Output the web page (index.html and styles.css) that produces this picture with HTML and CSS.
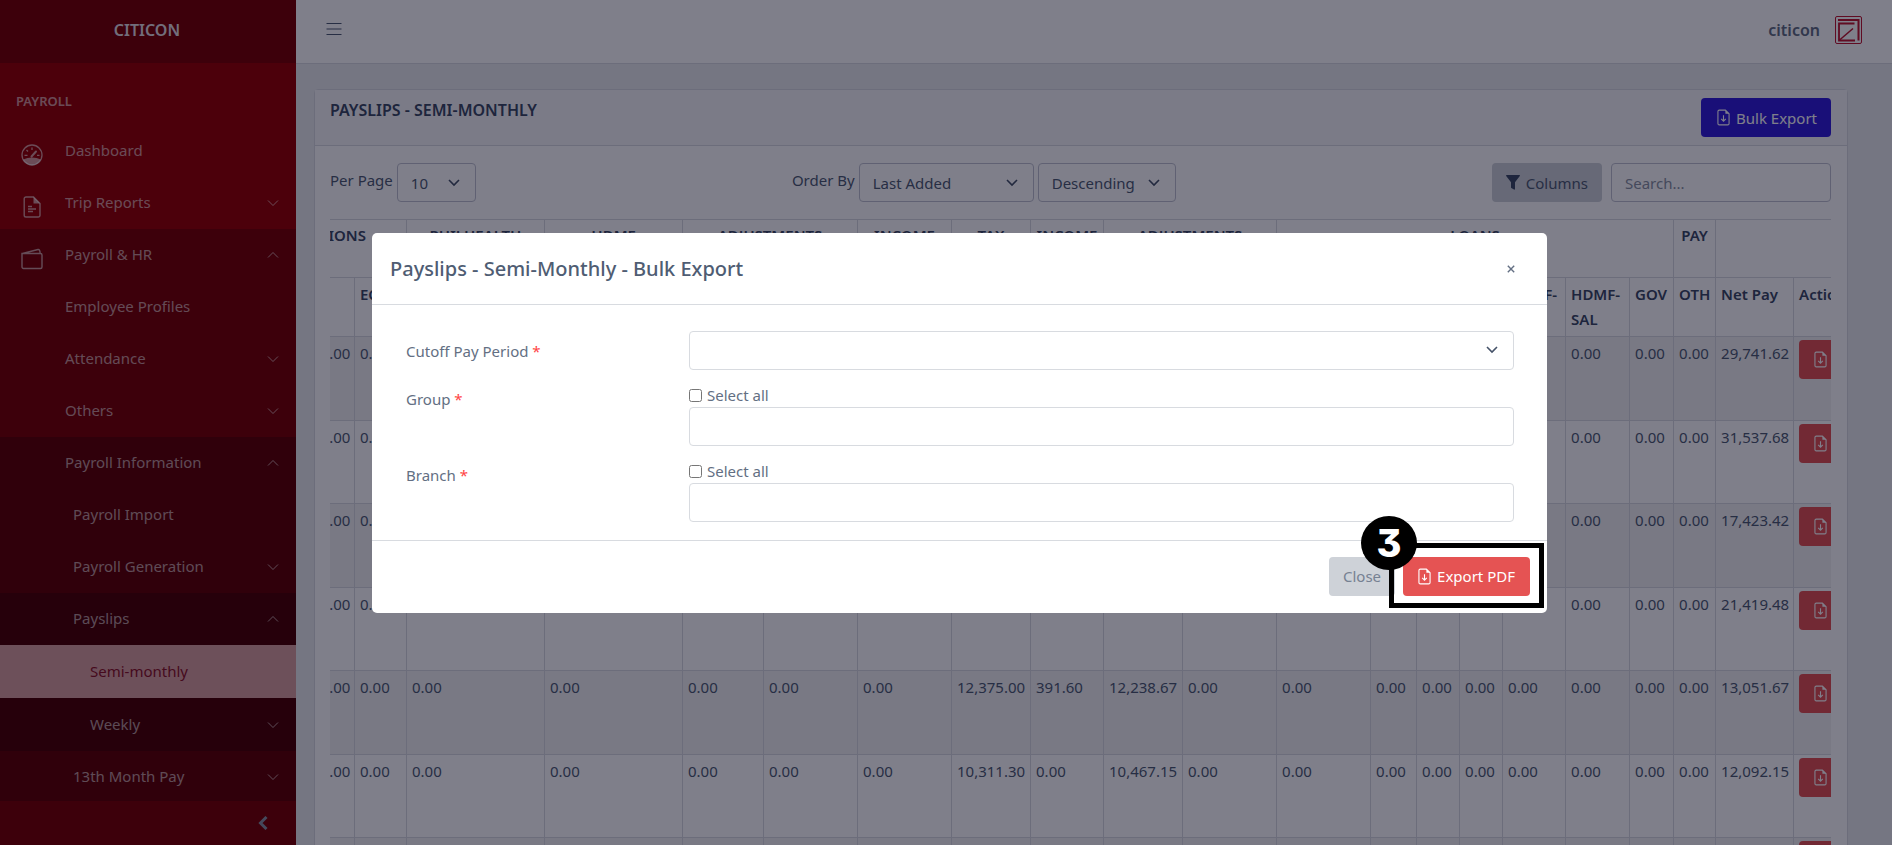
FILE: index.html
```html
<!DOCTYPE html>
<html lang="en">
<head>
<meta charset="utf-8">
<title>CITICON - Payslips</title>
<link rel="stylesheet" href="styles.css">
</head>
<body>
<svg class="sprite" aria-hidden="true">
  <symbol id="down" viewBox="0 0 12 12"><path d="M1 3.5l5 5 5-5" fill="none" stroke="currentColor"/></symbol>
  <symbol id="up" viewBox="0 0 12 12"><path d="M1 8.5l5-5 5 5" fill="none" stroke="currentColor"/></symbol>
  <symbol id="file-down" viewBox="0 0 14 18"><path d="M9 1H2.5A1.5 1.5 0 0 0 1 2.500V15.500A1.500 1.500 0 0 0 2.500 17h9a1.500 1.500 0 0 0 1.500-1.500V5z" fill="none" stroke="currentColor" stroke-width="1.200"/><path d="M9 1v4h4z" fill="currentColor"/><path d="M7 6.500v6.500M4.500 10.500L7 13l2.500-2.500" fill="none" stroke="currentColor" stroke-width="1.200"/></symbol>
</svg>
<div class="app">
  <aside class="sidebar">
    <div class="brand">CITICON</div>
    <nav class="nav">
      <div class="nav-title">PAYROLL</div>
      <a class="item" href="#">
        <svg class="nav-icon" viewBox="0 0 22 22"><circle cx="11" cy="11" r="10" fill="none" stroke="currentColor" stroke-width="1.300"/><path d="M2 15.500Q11 11.500 20 15.500A10 10 0 0 1 2 15.500z" fill="currentColor"/><path d="M10.500 12.500L15 7.500" stroke="currentColor" stroke-width="2" stroke-linecap="round"/><path d="M11 3.500v2.500M5.500 6l1.500 1.500M3.500 11.300h3M16 11.300h2.500" stroke="currentColor" stroke-width="1.300"/></svg>
        <span>Dashboard</span></a>
      <a class="item" href="#">
        <svg class="nav-icon" viewBox="0 0 22 22"><path d="M12.500 1H5A1.800 1.800 0 0 0 3.200 2.800v16.400A1.800 1.800 0 0 0 5 21h12.200a1.800 1.800 0 0 0 1.800-1.800V7.500z" fill="none" stroke="currentColor" stroke-width="1.400"/><path d="M12.500 1v6.500H19z" fill="currentColor"/><path d="M7 10.500h4M7 13h8M7 15.500h5" stroke="currentColor" stroke-width="1.300"/></svg>
        <span>Trip Reports</span><svg class="chev"><use href="#down"/></svg></a>
      <div class="group">
        <a class="item" href="#">
          <svg class="nav-icon" viewBox="0 0 22 22"><path d="M1 5.500h18.500A1.500 1.500 0 0 1 21 7v12a1.500 1.500 0 0 1-1.500 1.500h-17A1.500 1.500 0 0 1 1 19zM1.500 5.500L17 1.500q2-.4 2.200 4" fill="none" stroke="currentColor" stroke-width="1.400"/></svg>
          <span>Payroll &amp; HR</span><svg class="chev"><use href="#up"/></svg></a>
        <a class="item sub" href="#"><span>Employee Profiles</span></a>
        <a class="item sub" href="#"><span>Attendance</span><svg class="chev"><use href="#down"/></svg></a>
        <a class="item sub" href="#"><span>Others</span><svg class="chev"><use href="#down"/></svg></a>
        <div class="group">
          <a class="item sub" href="#"><span>Payroll Information</span><svg class="chev"><use href="#up"/></svg></a>
          <a class="item sub3" href="#"><span>Payroll Import</span></a>
          <a class="item sub3" href="#"><span>Payroll Generation</span><svg class="chev"><use href="#down"/></svg></a>
          <div class="group">
            <a class="item sub3" href="#"><span>Payslips</span><svg class="chev"><use href="#up"/></svg></a>
            <a class="item sub4 active" href="#"><span>Semi-monthly</span></a>
            <a class="item sub4" href="#"><span>Weekly</span><svg class="chev"><use href="#down"/></svg></a>
          </div>
          <a class="item sub3" href="#"><span>13th Month Pay</span><svg class="chev"><use href="#down"/></svg></a>
        </div>
      </div>
    </nav>
    <button class="minimize" type="button" aria-label="Collapse sidebar"><svg viewBox="0 0 10 14"><path d="M8.500 1L2.500 7l6 6" fill="none" stroke="currentColor" stroke-width="3"/></svg></button>
  </aside>

  <div class="main">
    <header class="topbar">
      <button class="burger" type="button" aria-label="Toggle menu"><svg viewBox="0 0 16 14"><path d="M.5 1.500h15M.5 7h15M.5 12.500h15" stroke="currentColor" stroke-width="1.200"/></svg></button>
      <a class="user" href="#">citicon
        <svg class="avatar" viewBox="0 0 27 28"><g fill="none" stroke="#c01830"><rect x=".5" y=".5" width="26" height="27" rx="1.500"/><path d="M3 4h20.500v20.500" stroke-width="2"/><path d="M19.500 7.500H4V24.500h16" stroke-width="1.800"/><path d="M4 24.500L18 12.500" stroke-width="1.600"/></g></svg></a>
    </header>
    <main class="content">
      <section class="card">
        <div class="card-head">
          <h1>PAYSLIPS - SEMI-MONTHLY</h1>
          <button class="btn primary" type="button"><svg class="file"><use href="#file-down"/></svg>Bulk Export</button>
        </div>
        <div class="card-body">
          <div class="filters">
            <div class="filter"><label for="per">Per Page</label><select id="per" class="per"><option>10</option></select></div>
            <div class="filter"><label for="order">Order By</label><select id="order" class="order"><option>Last Added</option></select><select class="dir" aria-label="Direction"><option>Descending</option></select></div>
            <div class="filter search-set">
              <button class="btn secondary" type="button"><svg class="funnel" viewBox="0 0 14 15"><path d="M.6 0h12.800q.9.100.4 1L9 7.200V14q-.2.900-1 .6L5.300 13q-.3-.3-.3-.7V7.200L.2 1Q-.2.100.6 0z" fill="#3c4b64"/></svg>Columns</button>
              <input class="search" type="search" placeholder="Search..." aria-label="Search">
            </div>
          </div>
          <div class="table-wrap">
            <table>
              <colgroup><col class="w105"><col class="w48"><col class="w52"><col class="w138"><col class="w138"><col class="w81"><col class="w94"><col class="w94"><col class="w79"><col class="w73"><col class="w79"><col class="w94"><col class="w94"><col class="w46"><col class="w43"><col class="w43"><col class="w63"><col class="w64"><col class="w44"><col class="w42"><col class="w78"><col class="w105"></colgroup>
              <thead>
                <tr><th colspan="3">CONTRIBUTIONS</th><th>PHILHEALTH</th><th>HDMF</th><th colspan="2">ADJUSTMENTS</th><th>INCOME</th><th>TAX</th><th>INCOME</th><th colspan="2">ADJUSTMENTS</th><th colspan="7">LOANS</th><th>PAY</th><th colspan="2"></th></tr>
                <tr><th>ER</th><th>EE</th><th>EC</th><th>EE</th><th>EE</th><th>Add</th><th>Less</th><th>Gross</th><th>Taxable</th><th>Tax</th><th>Net</th><th>Add</th><th>SSS</th><th>SAL</th><th>CAL</th><th>CO</th><th>HDMF-CAL</th><th>HDMF-SAL</th><th>GOV</th><th>OTH</th><th>Net Pay</th><th>Actions</th></tr>
              </thead>
              <tbody>
                <tr><td>0.00</td><td>50.00</td><td>0.00</td><td>0.00</td><td>0.00</td><td>0.00</td><td>0.00</td><td>0.00</td><td>0.00</td><td>0.00</td><td>0.00</td><td>0.00</td><td>0.00</td><td>0.00</td><td>0.00</td><td>0.00</td><td>0.00</td><td>0.00</td><td>0.00</td><td>0.00</td><td>29,741.62</td><td><button class="btn danger" type="button" aria-label="Export"><svg class="file"><use href="#file-down"/></svg>PDF</button></td></tr>
                <tr><td>0.00</td><td>50.00</td><td>0.00</td><td>0.00</td><td>0.00</td><td>0.00</td><td>0.00</td><td>0.00</td><td>0.00</td><td>0.00</td><td>0.00</td><td>0.00</td><td>0.00</td><td>0.00</td><td>0.00</td><td>0.00</td><td>0.00</td><td>0.00</td><td>0.00</td><td>0.00</td><td>31,537.68</td><td><button class="btn danger" type="button" aria-label="Export"><svg class="file"><use href="#file-down"/></svg>PDF</button></td></tr>
                <tr><td>0.00</td><td>50.00</td><td>0.00</td><td>0.00</td><td>0.00</td><td>0.00</td><td>0.00</td><td>0.00</td><td>0.00</td><td>0.00</td><td>0.00</td><td>0.00</td><td>0.00</td><td>0.00</td><td>0.00</td><td>0.00</td><td>0.00</td><td>0.00</td><td>0.00</td><td>0.00</td><td>17,423.42</td><td><button class="btn danger" type="button" aria-label="Export"><svg class="file"><use href="#file-down"/></svg>PDF</button></td></tr>
                <tr><td>0.00</td><td>50.00</td><td>0.00</td><td>0.00</td><td>0.00</td><td>0.00</td><td>0.00</td><td>0.00</td><td>0.00</td><td>0.00</td><td>0.00</td><td>0.00</td><td>0.00</td><td>0.00</td><td>0.00</td><td>0.00</td><td>0.00</td><td>0.00</td><td>0.00</td><td>0.00</td><td>21,419.48</td><td><button class="btn danger" type="button" aria-label="Export"><svg class="file"><use href="#file-down"/></svg>PDF</button></td></tr>
                <tr><td>0.00</td><td>50.00</td><td>0.00</td><td>0.00</td><td>0.00</td><td>0.00</td><td>0.00</td><td>0.00</td><td>12,375.00</td><td>391.60</td><td>12,238.67</td><td>0.00</td><td>0.00</td><td>0.00</td><td>0.00</td><td>0.00</td><td>0.00</td><td>0.00</td><td>0.00</td><td>0.00</td><td>13,051.67</td><td><button class="btn danger" type="button" aria-label="Export"><svg class="file"><use href="#file-down"/></svg>PDF</button></td></tr>
                <tr><td>0.00</td><td>50.00</td><td>0.00</td><td>0.00</td><td>0.00</td><td>0.00</td><td>0.00</td><td>0.00</td><td>10,311.30</td><td>0.00</td><td>10,467.15</td><td>0.00</td><td>0.00</td><td>0.00</td><td>0.00</td><td>0.00</td><td>0.00</td><td>0.00</td><td>0.00</td><td>0.00</td><td>12,092.15</td><td><button class="btn danger" type="button" aria-label="Export"><svg class="file"><use href="#file-down"/></svg>PDF</button></td></tr>
                <tr><td></td><td></td><td></td><td></td><td></td><td></td><td></td><td></td><td></td><td></td><td></td><td></td><td></td><td></td><td></td><td></td><td></td><td></td><td></td><td></td><td></td><td><button class="btn danger" type="button" aria-label="Export"><svg class="file"><use href="#file-down"/></svg>PDF</button></td></tr>
              </tbody>
            </table>
          </div>
        </div>
      </section>
    </main>
  </div>
</div>

<div class="backdrop">
  <div class="modal" role="dialog" aria-labelledby="dlg-title">
    <div class="modal-head">
      <h2 id="dlg-title">Payslips - Semi-Monthly - Bulk Export</h2>
      <button class="close-x" type="button" aria-label="Close"><svg viewBox="0 0 8 8"><path d="M.8.800l6.400 6.400M7.200.800L.8 7.200" stroke="currentColor" stroke-width="1.400"/></svg></button>
    </div>
    <form class="modal-body">
      <label for="cutoff">Cutoff Pay Period <span class="req">*</span></label>
      <select id="cutoff" class="field"><option></option></select>
      <label for="group">Group <span class="req">*</span></label>
      <div><label class="check"><input type="checkbox">Select all</label><input id="group" class="field" type="text"></div>
      <label for="branch">Branch <span class="req">*</span></label>
      <div><label class="check"><input type="checkbox">Select all</label><input id="branch" class="field" type="text"></div>
    </form>
    <div class="modal-foot">
      <button class="btn secondary dim" type="button">Close</button>
      <div class="marked">
        <button class="btn danger" type="button"><svg class="file"><use href="#file-down"/></svg>Export PDF</button>
        <div class="mark-box"></div>
        <div class="mark-num">3</div>
      </div>
    </div>
  </div>
</div>
</body>
</html>
```
FILE: styles.css
```css
* { box-sizing: border-box; }
body {
  margin: 0;
  font: 15px/24px "Noto Sans", "Open Sans", sans-serif;
  color: #4f5d73;
  background: #ebedef;
  overflow: hidden;
}
a { color: inherit; text-decoration: none; }
button, input, select { font: inherit; color: inherit; }
h1, h2 { margin: 0; }
.sprite { position: absolute; width: 0; height: 0; }
.app { display: flex; height: 100vh; overflow: hidden; }

/* Sidebar */
.sidebar {
  flex: 0 0 296px;
  display: flex;
  flex-direction: column;
  background: #990000;
  color: rgba(255, 255, 255, .6);
}
.brand {
  flex: none;
  height: 63px;
  padding: 0 2px 3px 0;
  display: flex;
  align-items: center;
  justify-content: center;
  background: rgba(0, 0, 0, .2);
  color: #e4dde0;
  font-size: 16px;
  font-weight: 600;
}
.nav { flex: 1; min-height: 0; overflow: hidden; }
.nav-title { padding: 26px 16px 12px; font-size: 13px; font-weight: 600; }
.group { background: rgba(0, 0, 0, .2); }
.item { display: flex; align-items: center; height: 52px; padding: 0 16px 0 21px; }
.item span { flex: 1; padding-bottom: 2px; }
.nav-icon { width: 22px; height: 22px; margin: 8px 22px 0 0; }
.chev { width: 12px; height: 12px; margin-right: 1px; }
.sub { padding-left: 65px; }
.sub3 { padding-left: 73px; }
.sub4 { padding-left: 90px; height: 53px; }
.active { background: #dba09f; color: #8c1426; }
.minimize {
  flex: 0 0 44px;
  display: flex;
  align-items: center;
  justify-content: flex-end;
  padding: 0 28px 0 0;
  border: 0;
  background: #7a0000;
  color: #8a93a2;
}
.minimize svg { width: 10px; height: 14px; }

/* Top bar */
.main { flex: 1; min-width: 0; }
.topbar {
  display: flex;
  align-items: center;
  justify-content: space-between;
  height: 64px;
  padding: 0 30px 3px;
  background: #fff;
  border-bottom: 1px solid #d8dbe0;
}
.burger { display: flex; padding: 0 0 2px; border: 0; background: none; color: #4f5d73; }
.burger svg { width: 16px; height: 14px; }
.user { display: flex; align-items: center; gap: 15px; font-size: 16px; font-weight: 600; color: #636f83; }
.avatar { width: 27px; height: 28px; }

/* Card */
.content { padding: 25px 44px 0 18px; }
.card { background: #fff; border: 1px solid #d8dbe0; border-radius: 4px; }
.card-head {
  display: flex;
  align-items: flex-start;
  justify-content: space-between;
  padding: 8px 16px 8px 15px;
  background: #f7f7f9;
  border-bottom: 1px solid #d8dbe0;
}
.card-head h1 { font-size: 16px; line-height: 24px; font-weight: 600; color: #3c4b64; }
.card-body { padding: 17px 16px 17px 15px; }
.btn {
  display: inline-flex;
  align-items: center;
  justify-content: center;
  height: 39px;
  padding: 0 12px;
  border: 0;
  border-radius: 4px;
  white-space: nowrap;
}
.file { flex: none; width: 13px; height: 17px; margin-right: 6px; }
.primary { background: #321fdb; color: #fff; padding: 0 14px 0 16px; }
.secondary { background: #ced2d8; color: #4f5d73; padding: 0 14px; }
.danger { background: #e55353; color: #fff; }
.funnel { width: 14px; height: 15px; margin-right: 6px; }
.filters { display: flex; justify-content: space-between; margin-bottom: 17px; }
.filter { display: flex; gap: 4px; }
.filter label { padding-top: 5px; }
.search-set { gap: 9px; }
select, .search, .field {
  height: 39px;
  border: 1px solid #c0c3d0;
  border-radius: 4px;
  background-color: #fff;
  padding: 0 13px;
}
select {
  appearance: none;
  background: #fff url("data:image/svg+xml,%3Csvg xmlns='http://www.w3.org/2000/svg' viewBox='0 0 12 8'%3E%3Cpath d='M1 1l5 5 5-5' fill='none' stroke='%23455268' stroke-width='1.6'/%3E%3C/svg%3E") no-repeat right 15px center / 12px 8px;
}
.per { width: 79px; }
.order { width: 175px; }
.dir { width: 138px; }
.search { width: 220px; }
::placeholder { color: #8a93a2; opacity: 1; }

/* Payslip table, scrolled sideways */
.table-wrap { overflow: hidden; }
table {
  width: 1697px;
  margin-left: -129px;
  table-layout: fixed;
  border-collapse: collapse;
}
th, td { height: 83px; padding: 4px 5px; border: 1px solid #d8dbe0; vertical-align: top; text-align: left; }
td:last-child { padding-top: 3px; }
th { height: 58px; font-weight: 600; color: #3c4b64; line-height: 25px; }
tr + tr th { height: 58px; padding: 4px 5px; }
tr:first-child th { padding-top: 3px; text-align: center; }
tbody tr:nth-child(odd) { background: #f2f2f3; }
tbody tr:nth-child(odd) td { height: 84px; }
td .btn { padding: 0 15px; }
.w42 { width: 42px; } .w43 { width: 43px; } .w44 { width: 44px; } .w46 { width: 46px; }
.w48 { width: 48px; } .w52 { width: 52px; } .w63 { width: 63px; } .w64 { width: 64px; }
.w73 { width: 73px; } .w78 { width: 78px; } .w79 { width: 79px; } .w81 { width: 81px; }
.w94 { width: 94px; } .w105 { width: 105px; } .w138 { width: 138px; }

/* Dialog */
.backdrop {
  position: fixed;
  inset: 0;
  display: flex;
  align-items: center;
  justify-content: center;
  padding-left: 27px;
  background: rgba(0, 0, 21, .5);
}
.modal { width: 63%; background: #fff; border-radius: 5px; color: #636f83; }
.modal-head {
  display: flex;
  align-items: center;
  justify-content: space-between;
  height: 72px;
  padding: 2px 32px 0 18px;
  border-bottom: 1px solid #d8dbe0;
}
.modal-head h2 { font-size: 20px; line-height: 28px; font-weight: 500; color: #4f5d73; }
.close-x { display: flex; padding: 0; border: 0; background: none; color: #636f83; }
.close-x svg { width: 8px; height: 8px; }
.modal-body {
  display: grid;
  grid-template-columns: 283px 1fr;
  row-gap: 13px;
  padding: 26px 33px 18px 34px;
}
.modal-body > label { padding-top: 8px; }
.modal-body > label ~ label { padding-top: 4px; }
.req { color: #f44; }
.field { display: block; width: 100%; border-color: #d8dbe0; }
.check { display: flex; align-items: center; height: 24px; }
.check input { width: 13px; height: 13px; margin: 2px 5px 0 0; }
.modal-foot {
  display: flex;
  justify-content: flex-end;
  gap: 8px;
  padding: 16px 17px 17px;
  border-top: 1px solid #d8dbe0;
}
.dim { color: #768192; }
.marked { position: relative; }
.marked .btn { padding: 0 15px; }
.mark-box { position: absolute; inset: -14px -14px -12px -14px; border: 5px solid #000; }
.mark-num {
  position: absolute;
  left: -42px;
  top: -41px;
  width: 56px;
  height: 54px;
  border-radius: 50%;
  background: #000;
  color: #fff;
  font: 800 38px/54px Inter, sans-serif;
  font-feature-settings: "cv09";
  text-align: center;
}
```
